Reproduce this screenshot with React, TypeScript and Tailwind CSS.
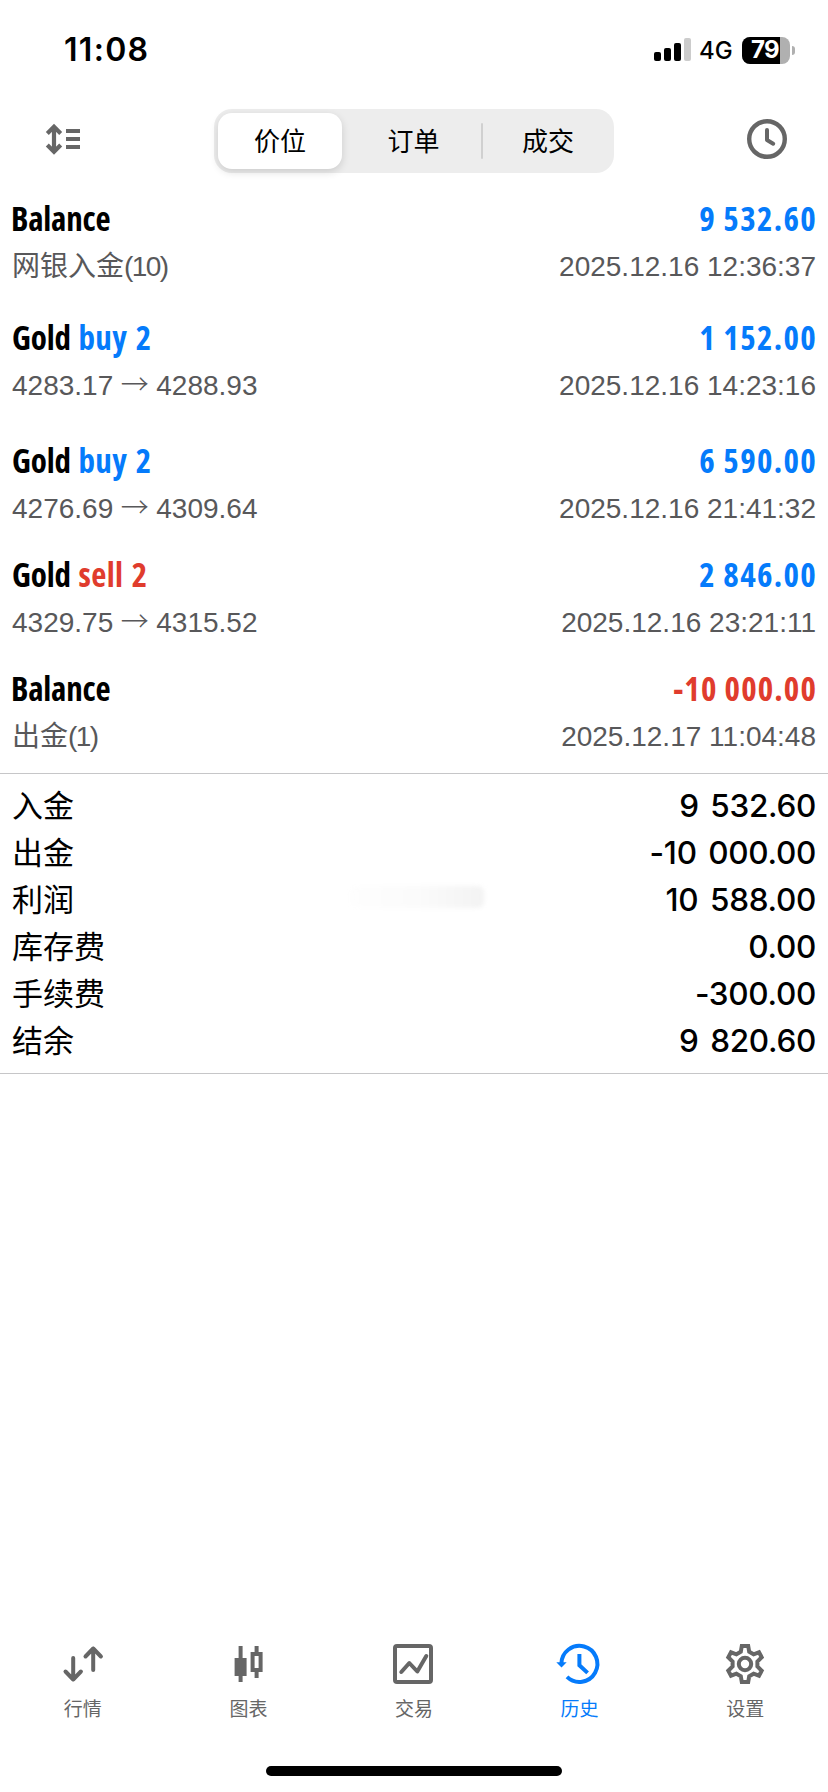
import type { ReactNode } from "react";

type Deal = {
  title: string;
  side?: "buy" | "sell";
  volume?: string;
  amount: string;
  negative?: boolean;
  detail: ReactNode;
  time: string;
  height: string;
};

function Prices({ from, to }: { from: string; to: string }) {
  return (
    <>
      {from}
      <span className="mx-[7.5px] font-['Noto_Sans_CJK_SC'] leading-none font-light">→</span>
      {to}
    </>
  );
}

function Note({ text, count }: { text: string; count: number }) {
  return (
    <>
      {text}
      <span className="tracking-[-1.6px]">({count})</span>
    </>
  );
}

const deals: Deal[] = [
  { title: "Balance", amount: "9 532.60", detail: <Note text="网银入金" count={10} />, time: "2025.12.16 12:36:37", height: "h-[119px]" },
  { title: "Gold", side: "buy", volume: "2", amount: "1 152.00", detail: <Prices from="4283.17" to="4288.93" />, time: "2025.12.16 14:23:16", height: "h-[123px]" },
  { title: "Gold", side: "buy", volume: "2", amount: "6 590.00", detail: <Prices from="4276.69" to="4309.64" />, time: "2025.12.16 21:41:32", height: "h-[114px]" },
  { title: "Gold", side: "sell", volume: "2", amount: "2 846.00", detail: <Prices from="4329.75" to="4315.52" />, time: "2025.12.16 23:21:11", height: "h-[114px]" },
  { title: "Balance", amount: "-10 000.00", negative: true, detail: <Note text="出金" count={1} />, time: "2025.12.17 11:04:48", height: "h-[107px]" },
];

const summary = [
  ["入金", "9 532.60"],
  ["出金", "-10 000.00"],
  ["利润", "10 588.00"],
  ["库存费", "0.00"],
  ["手续费", "-300.00"],
  ["结余", "9 820.60"],
];

function StatusBar() {
  return (
    <div className="flex h-[100px] items-center justify-between pl-[64px] pr-[33px]">
      <span className="text-[32px] leading-[40px] font-semibold tracking-[1.3px] text-black">11:08</span>
      <div className="flex items-center">
        <svg className="h-[24px] w-[38px]" viewBox="0 0 38 24">
          <rect x="0" y="14" width="7" height="9" rx="2" />
          <rect x="10" y="10" width="7" height="13" rx="2" />
          <rect x="20" y="5" width="7" height="18" rx="2" />
          <rect x="30" y="0" width="7" height="23" rx="2" fill="#cccccc" />
        </svg>
        <span className="ml-[7px] w-[43px] pt-[2px] text-[24px] leading-[24px] font-medium text-black">4G</span>
        <div className="flex h-[27px] w-[48px] overflow-hidden rounded-[8px] bg-[#b0b0b0]">
          <div className="flex w-[38px] items-center justify-end bg-black pr-px text-[24px] font-bold tracking-[-0.6px] text-white">79</div>
        </div>
        <div className="ml-[2px] h-[9px] w-[3px] rounded-r-full bg-[#b0b0b0]" />
      </div>
    </div>
  );
}

function Toolbar() {
  return (
    <div className="flex items-start justify-between pt-[9px] pr-[38px] pl-[38px]">
      <svg className="mt-[6px] h-[48px] w-[48px]" viewBox="38 115 48 48" fill="none" stroke="#666666">
        <path d="M54 127v25M47.3 133.5l6.7-6.7 6.7 6.7M47.3 145l6.7 6.7 6.7-6.7" strokeWidth="4.2" />
        <path d="M66 131h14M66 139h14M66 147h14" strokeWidth="4" />
      </svg>
      <div className="flex h-[64px] w-[400px] items-center rounded-[18px] bg-[#ededed] p-[4px] text-[26px] text-black">
        <div className="flex h-[56px] w-[124px] items-center justify-center rounded-[14px] bg-white shadow-[0_3px_8px_rgba(0,0,0,0.14)]">价位</div>
        <div className="flex-1 pl-[4px] text-center">订单</div>
        <div className="h-[36px] w-[2px] rounded-full bg-[#d0d0d0]" />
        <div className="w-[127px] pl-[3px] text-center">成交</div>
      </div>
      <svg className="mt-[6px] h-[48px] w-[48px]" viewBox="741 115 48 48" fill="none" stroke="#666666">
        <circle cx="766" cy="139" r="17.8" strokeWidth="4.4" />
        <path d="M766 130v10l6.2 3.7" strokeWidth="4" strokeLinecap="round" strokeLinejoin="round" />
      </svg>
    </div>
  );
}

function DealRow({ deal }: { deal: Deal }) {
  return (
    <div className={`flex flex-col gap-[6px] pr-[12px] pl-[12px] ${deal.height}`}>
      <div className="flex justify-between font-['Open_Sans'] text-[33px] leading-[45px] font-bold [font-stretch:75%]">
        <span className={`tracking-[-0.2px] text-black [word-spacing:2px] ${deal.side ? "" : "-ml-px"}`}>
          {deal.title}
          {deal.side && (
            <>
              {" "}
              <span className={`tracking-[0.4px] ${deal.side === "buy" ? "text-[#057bfb]" : "text-[#e03c2d]"}`}>
                {deal.side} {deal.volume}
              </span>
            </>
          )}
        </span>
        <span className={deal.negative ? "-mr-px tracking-[1.1px] text-[#e03c2d]" : "-mr-px tracking-[1.3px] text-[#057bfb]"}>{deal.amount}</span>
      </div>
      <div className="flex justify-between font-['Liberation_Sans','Noto_Sans_CJK_SC',sans-serif] text-[28px] leading-[40px] text-[#58585a]">
        <span>{deal.detail}</span>
        <span>{deal.time}</span>
      </div>
    </div>
  );
}

function Summary() {
  return (
    <div className="relative border-y border-[#c6c6c8] pt-[8px] pb-[9px] text-[31px] leading-[47px] text-black">
      {summary.map(([label, value]) => (
        <div key={label} className="flex justify-between pr-[12px] pl-[12px]">
          <span>{label}</span>
          <span className="text-[31.5px] font-medium tracking-[-0.3px] [word-spacing:3.5px]">{value}</span>
        </div>
      ))}
      <div className="absolute top-[112px] left-[350px] h-[22px] w-[134px] rounded-[6px] bg-linear-to-r from-[#fefefe] via-[#fbfbfb] to-[#f3f3f3] blur-[2px]" />
    </div>
  );
}

const tabs = [
  {
    label: "行情",
    icon: (
      <path d="M14.2 18v21.5M6.5 31.5l7.7 8 7.7-8M34.2 30V8.5M26.5 16.5l7.7-8 7.7 8" strokeWidth="4" strokeLinecap="round" strokeLinejoin="round" />
    ),
  },
  {
    label: "图表",
    icon: (
      <>
        <path d="M10.6 18h4V6h4v12h4v18h-4v6h-4v-6h-4z" fill="currentColor" stroke="none" />
        <path d="M28.6 14h8v16h-8zM32.6 6v8M32.6 30v8" strokeWidth="4" />
      </>
    ),
  },
  {
    label: "交易",
    icon: (
      <>
        <rect x="5" y="6" width="36" height="36" rx="2" strokeWidth="4" />
        <path d="M11.3 32l8-9 8 8.5 9-15.5" strokeWidth="4" strokeLinecap="round" strokeLinejoin="round" />
      </>
    ),
  },
  {
    label: "历史",
    active: true,
    icon: (
      <>
        <path d="M5.4 23.6a18 18 0 1 1 5.6 13.3" strokeWidth="4" />
        <path d="M0.3 22.3h10.4l-5.2 5.2z" fill="currentColor" stroke="none" />
        <path d="M23.4 14v11.3l8.2 7.6" strokeWidth="4" />
      </>
    ),
  },
  {
    label: "设置",
    icon: (
      <>
        <path d="M20.8 6h6.4l1 5.8 4.4 2.5 5.4-2 2.7 5-4.3 4.2v5l4.3 4.2-2.7 5-5.4-2-4.4 2.5-1 5.8h-6.4l-1-5.8-4.4-2.5-5.4 2-2.7-5 4.3-4.2v-5l-4.3-4.2 2.7-5 5.4 2 4.4-2.5z" strokeWidth="4" />
        <circle cx="24" cy="24" r="6.2" strokeWidth="4" />
      </>
    ),
  },
];

function TabBar() {
  return (
    <nav className="mt-auto grid h-[152px] grid-cols-5">
      {tabs.map((tab) => (
        <div key={tab.label} className={`flex flex-col items-center ${tab.active ? "text-[#057bfb]" : "text-[#666666]"}`}>
          <svg className="h-[48px] w-[48px] overflow-visible" viewBox="0 0 48 48" fill="none" stroke="currentColor">
            {tab.icon}
          </svg>
          <span className="mt-[8px] text-[19px] leading-[28px]">{tab.label}</span>
        </div>
      ))}
    </nav>
  );
}

export default function App() {
  return (
    <div className="flex h-[1792px] w-[828px] flex-col overflow-hidden bg-white font-['Inter','Noto_Sans_CJK_SC',sans-serif]">
      <StatusBar />
      <Toolbar />
      <div className="pt-[23px]">
        {deals.map((deal) => (
          <DealRow key={deal.time} deal={deal} />
        ))}
      </div>
      <Summary />
      <TabBar />
      <div className="relative h-0">
        <div className="absolute bottom-[16px] left-[266px] h-[10px] w-[296px] rounded-full bg-black" />
      </div>
    </div>
  );
}
